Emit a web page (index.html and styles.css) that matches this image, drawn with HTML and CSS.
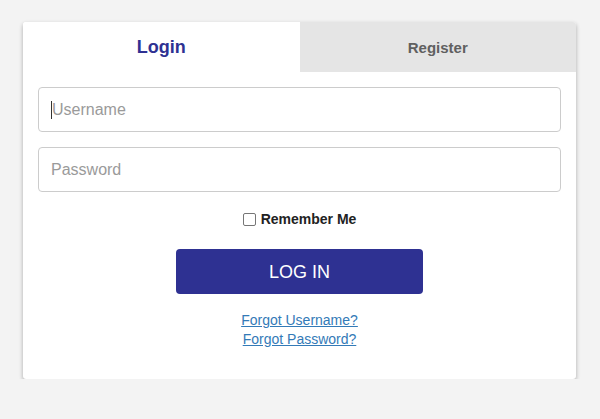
FILE: index.html
```html
<!DOCTYPE html>
<html>
<head>
<meta charset="utf-8">
<link rel="stylesheet" href="styles.css">
</head>
<body>
<div class="card">
  <div class="tabs">
    <div class="tab active">Login</div>
    <div class="tab">Register</div>
  </div>
  <form class="form">
    <div class="field"><span class="caret"></span><span class="ph">Username</span></div>
    <div class="field"><span class="ph">Password</span></div>
    <label class="remember"><span class="check"></span>Remember Me</label>
    <div class="btn-row"><button type="button" class="btn">LOG IN</button></div>
    <div class="links">
      <a href="#">Forgot Username?</a>
      <a href="#">Forgot Password?</a>
    </div>
  </form>
</div>
</body>
</html>
```

FILE: styles.css
```css
html, body {
  margin: 0;
  padding: 0;
  background: #f3f3f3;
  font-family: "Liberation Sans", Arial, sans-serif;
}
body {
  padding-top: 22px;
}
.card {
  width: 553px;
  margin-left: 23px;
  background: #fff;
  border-radius: 3px;
  box-shadow: 0 2px 4px rgba(0,0,0,0.3);
  overflow: hidden;
}
.tabs {
  display: flex;
  height: 50px;
}
.tab {
  flex: 1;
  display: flex;
  align-items: center;
  justify-content: center;
  background: #e5e5e5;
  color: #606060;
  font-weight: bold;
  font-size: 15px;
}
.tab.active {
  background: #fff;
  color: #2e3192;
  font-size: 18px;
}
.form {
  display: flex;
  flex-direction: column;
  padding: 15px 15px 30px 15px;
  margin: 0;
}
.field {
  height: 45px;
  border: 1px solid #cccccc;
  border-radius: 4px;
  box-sizing: border-box;
  display: flex;
  align-items: center;
  padding-left: 12px;
  font-size: 16px;
  color: #9a9a9a;
}
.field + .field {
  margin-top: 15px;
}
.caret {
  display: inline-block;
  width: 1px;
  height: 18px;
  background: #333;
}
.remember {
  display: flex;
  align-items: center;
  justify-content: center;
  margin-top: 18px;
  height: 18px;
  font-size: 14px;
  font-weight: bold;
  color: #222;
}
.check {
  display: inline-block;
  width: 11px;
  height: 11px;
  border: 1px solid #767676;
  border-radius: 2px;
  margin-right: 5px;
  background: #fff;
}
.btn-row {
  display: flex;
  justify-content: center;
  margin-top: 21px;
}
.btn {
  width: 247px;
  height: 45px;
  border: none;
  border-radius: 4px;
  background: #2e3192;
  color: #fff;
  font-family: "Liberation Sans", Arial, sans-serif;
  font-size: 18px;
  padding: 2px 0 0 0;
}
.links {
  margin-top: 17px;
  display: flex;
  flex-direction: column;
  align-items: center;
  font-size: 14px;
  line-height: 19px;
}
.links a {
  color: #337ab7;
  text-decoration: underline;
}
```
